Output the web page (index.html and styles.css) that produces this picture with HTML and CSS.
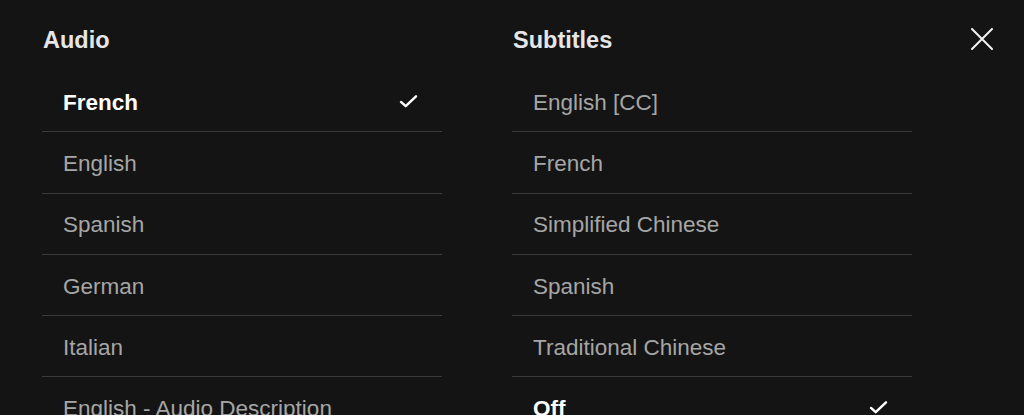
FILE: index.html
```html
<!DOCTYPE html>
<html lang="en">

<head>
    <meta charset="UTF-8">
    <meta name="viewport" content="width=device-width, initial-scale=1.0">
    <title>Audio &amp; Subtitles</title>
    <link rel="stylesheet" href="styles.css">
</head>

<body>
    <div class="panel">
        <div class="column">
            <h2>Audio</h2>
            <ul class="track-list">
                <li class="selected">French
                    <svg class="check" viewBox="0 0 20 16"><path d="M2 8.5 L7 13 L18 2.5" /></svg>
                </li>
                <li>English</li>
                <li>Spanish</li>
                <li>German</li>
                <li>Italian</li>
                <li>English - Audio Description</li>
            </ul>
        </div>
        <div class="column">
            <h2>Subtitles</h2>
            <ul class="track-list">
                <li>English [CC]</li>
                <li>French</li>
                <li>Simplified Chinese</li>
                <li>Spanish</li>
                <li>Traditional Chinese</li>
                <li class="selected">Off
                    <svg class="check" viewBox="0 0 20 16"><path d="M2 8.5 L7 13 L18 2.5" /></svg>
                </li>
            </ul>
        </div>
        <button class="btn-close" aria-label="Close">
            <svg viewBox="0 0 22 22"><path d="M1 1 L21 21 M21 1 L1 21" /></svg>
        </button>
    </div>
</body>

</html>
```

FILE: styles.css
```css
body {
    background-color: #141414;
    color: #FFFFFF;
    font-family: "Liberation Sans", Arial, sans-serif;
    margin: 0;
    padding: 0;
    height: 415px;
    overflow: hidden;
}

.panel {
    position: relative;
    display: flex;
    gap: 70px;
    padding: 0 42px;
}

.column {
    width: 400px;
}

.column h2 {
    margin: 0;
    height: 71px;
    line-height: 81px;
    font-size: 23.5px;
    font-weight: bold;
    color: #E6E6E6;
    padding-left: 1px;
}

.track-list {
    list-style: none;
    margin: 0;
    padding: 0;
}

.track-list li {
    display: flex;
    justify-content: space-between;
    align-items: center;
    box-sizing: border-box;
    height: 61.3px;
    padding: 3px 24px 0 21px;
    font-size: 22.5px;
    color: #A6A6A6;
    border-bottom: 1px solid #3A3A3A;
}

.track-list li.selected {
    color: #FFFFFF;
    font-weight: bold;
}

.check {
    width: 19px;
    height: 15px;
    margin-top: -3px;
    fill: none;
    stroke: #FFFFFF;
    stroke-width: 2.6;
    stroke-linecap: round;
    stroke-linejoin: round;
}

.btn-close {
    position: absolute;
    top: 28px;
    right: 31px;
    width: 22px;
    height: 22px;
    padding: 0;
    background: none;
    border: none;
    cursor: pointer;
}

.btn-close svg {
    width: 22px;
    height: 22px;
    fill: none;
    stroke: #F2F2F2;
    stroke-width: 2;
    stroke-linecap: round;
}
```
